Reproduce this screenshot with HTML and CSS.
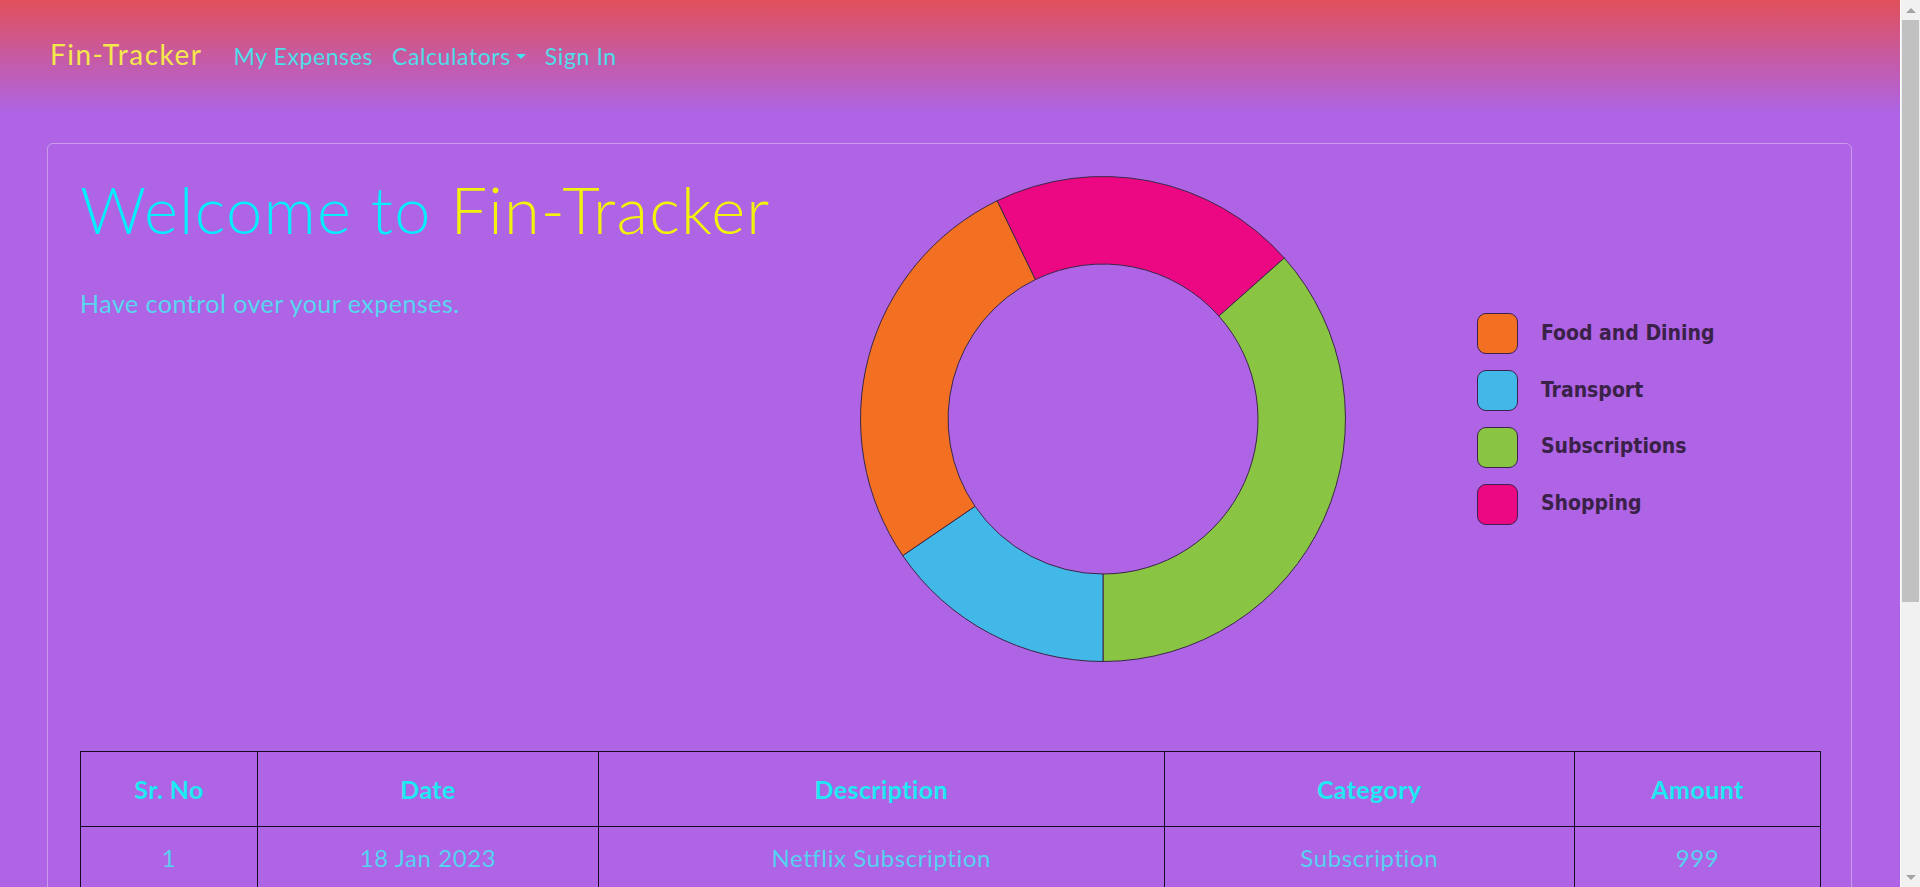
FILE: index.html
```html
<!DOCTYPE html>
<html lang="en">
<head>
<meta charset="utf-8">
<title>Fin-Tracker</title>
<link rel="stylesheet" href="styles.css">
</head>
<body>
<nav class="navbar">
  <a class="brand" href="#">Fin-Tracker</a>
  <ul class="nav-links">
    <li><a class="nav-link" href="#">My Expenses</a></li>
    <li><a class="nav-link" href="#">Calculators<span class="caret"></span></a></li>
    <li><a class="nav-link" href="#">Sign In</a></li>
  </ul>
</nav>
<main class="card">
  <section class="hero">
    <div class="intro">
      <h1 class="title"><span class="cyan">Welcome to</span> <span class="yellow">Fin-Tracker</span></h1>
      <p class="lead">Have control over your expenses.</p>
    </div>
    <div class="chart">
      <svg class="donut" width="490" height="490" viewBox="0 0 490 490">
        <path class="seg pink" d="M139.1 26.8 A242.5 242.5 0 0 1 426.3 84.0 L360.9 142.1 A155 155 0 0 0 177.3 105.6 Z"/>
        <path class="seg green" d="M426.3 84.0 A242.5 242.5 0 0 1 245 487.5 L245 400 A155 155 0 0 0 360.9 142.1 Z"/>
        <path class="seg blue" d="M245 487.5 A242.5 242.5 0 0 1 44.7 381.6 L117.0 332.3 A155 155 0 0 0 245 400 Z"/>
        <path class="seg orange" d="M44.7 381.6 A242.5 242.5 0 0 1 139.1 26.8 L177.3 105.6 A155 155 0 0 0 117.0 332.3 Z"/>
      </svg>
      <ul class="legend">
        <li class="legend-item"><span class="swatch orange-bg"></span><span class="legend-label">Food and Dining</span></li>
        <li class="legend-item"><span class="swatch blue-bg"></span><span class="legend-label">Transport</span></li>
        <li class="legend-item"><span class="swatch green-bg"></span><span class="legend-label">Subscriptions</span></li>
        <li class="legend-item"><span class="swatch pink-bg"></span><span class="legend-label">Shopping</span></li>
      </ul>
    </div>
  </section>
  <table class="expenses">
    <colgroup>
      <col class="col-no"><col class="col-date"><col class="col-desc"><col class="col-cat"><col class="col-amt">
    </colgroup>
    <thead>
      <tr><th>Sr. No</th><th>Date</th><th>Description</th><th>Category</th><th>Amount</th></tr>
    </thead>
    <tbody>
      <tr><td>1</td><td>18 Jan 2023</td><td>Netflix Subscription</td><td>Subscription</td><td>999</td></tr>
      <tr><td>2</td><td>19 Jan 2023</td><td>Dinner</td><td>Food and Dining</td><td>1200</td></tr>
      <tr><td>3</td><td>20 Jan 2023</td><td>Cab</td><td>Transport</td><td>350</td></tr>
      <tr><td>4</td><td>21 Jan 2023</td><td>Clothes</td><td>Shopping</td><td>1500</td></tr>
      <tr><td>5</td><td>22 Jan 2023</td><td>Music Subscription</td><td>Subscription</td><td>199</td></tr>
      <tr><td>6</td><td>23 Jan 2023</td><td>Bus Pass</td><td>Transport</td><td>500</td></tr>
    </tbody>
  </table>
</main>
<div class="scrollbar" aria-hidden="true">
  <span class="sb-arrow sb-up"></span>
  <span class="sb-thumb"></span>
  <span class="sb-arrow sb-down"></span>
</div>
</body>
</html>
```
FILE: styles.css
```css
* { box-sizing: border-box; }

body {
  margin: 0;
  font-family: Lato, "Open Sans", sans-serif;
  background: #ae64e4 linear-gradient(180deg, #e1505a 0px, #c85aa0 55px, #ae64e4 112px) no-repeat;
  background-size: 100% 112px;
}

/* Window scrollbar (drawn over the page edge) */
.scrollbar {
  position: fixed;
  top: 0;
  right: 0;
  width: 20px;
  height: 100vh;
  background: #f1f1f1;
  border-left: 1px solid #fafafa;
  display: flex;
  flex-direction: column;
  align-items: center;
}
.sb-arrow {
  flex: 0 0 20px;
  width: 100%;
  display: flex;
  align-items: center;
  justify-content: center;
}
.sb-up::before,
.sb-down::before {
  content: "";
  border-left: 5px solid transparent;
  border-right: 5px solid transparent;
}
.sb-up::before { border-bottom: 5px solid #a3a3a3; }
.sb-down { margin-top: auto; }
.sb-down::before { border-top: 5px solid #a3a3a3; }
.sb-thumb {
  width: 17px;
  height: 582px;
  background: #c1c1c1;
}

/* Navbar */
.navbar {
  display: flex;
  align-items: baseline;
  height: 71px;
  padding: 37px 0 0 50px;
}
.brand {
  font-size: 28px;
  line-height: 34px;
  letter-spacing: 1.5px;
  color: #f3e84c;
  text-decoration: none;
  margin-right: 31px;
}
.nav-links {
  display: flex;
  align-items: baseline;
  gap: 19px;
  list-style: none;
  margin: 0;
  padding: 0;
}
.nav-link {
  font-size: 23px;
  letter-spacing: 0.6px;
  color: #4fdde8;
  text-decoration: none;
}
.caret {
  display: inline-block;
  margin-left: 5px;
  vertical-align: 0.28em;
  border-top: 5px solid #3fe6f0;
  border-left: 5px solid transparent;
  border-right: 5px solid transparent;
}

/* Card */
.card {
  margin: 72px 68px 80px 47px;
  border: 1px solid rgba(255, 255, 255, 0.35);
  border-radius: 6px;
  padding: 30px 31px 32px 32px;
}
.hero {
  display: flex;
  align-items: flex-start;
}
.intro { flex: 0 0 777.5px; }
.title {
  margin: 3px 0 0;
  font-size: 65px;
  line-height: 65px;
  font-weight: 300;
  letter-spacing: 1.2px;
}
.cyan { color: #06eefc; }
.yellow { color: #f2f20c; }
.lead {
  margin: 43px 0 0;
  font-size: 25px;
  line-height: 37.5px;
  font-weight: 400;
  letter-spacing: 0.5px;
  color: #58d6f0;
}

.chart {
  display: flex;
  align-items: center;
}
.donut { display: block; overflow: visible; }
.seg { stroke: #3a2748; stroke-width: 1; }
.orange { fill: #f37022; }
.blue { fill: #41b8e8; }
.green { fill: #89c442; }
.pink { fill: #ec0882; }

.legend {
  list-style: none;
  margin: 0 0 0 129.5px;
  padding: 0;
  display: flex;
  flex-direction: column;
  gap: 15.7px;
}
.legend-item {
  display: flex;
  align-items: center;
  height: 41px;
}
.swatch {
  width: 41px;
  height: 41px;
  border-radius: 9px;
  border: 1px solid #3b2150;
}
.orange-bg { background: #f37022; }
.blue-bg { background: #41b8e8; }
.green-bg { background: #89c442; }
.pink-bg { background: #ec0882; }
.legend-label {
  margin-left: 23px;
  margin-top: -2px;
  font-family: "DejaVu Sans Condensed", "DejaVu Sans", sans-serif;
  font-weight: 700;
  font-size: 21px;
  color: #3a2148;
}

/* Table */
.expenses {
  width: 100%;
  margin-top: 87px;
  border-collapse: collapse;
  table-layout: fixed;
}
.col-no { width: 177px; }
.col-date { width: 341px; }
.col-desc { width: 565.5px; }
.col-cat { width: 410.5px; }
.col-amt { width: 246px; }
.expenses th,
.expenses td {
  border: 1px solid #150b20;
  text-align: center;
  padding: 0;
}
.expenses th {
  height: 75px;
  font-size: 25px;
  letter-spacing: 0.4px;
  font-weight: 700;
  color: #1ee8f2;
}
.expenses td {
  height: 62px;
  font-size: 24px;
  letter-spacing: 0.6px;
  font-weight: 400;
  color: #55d2f0;
}
```
